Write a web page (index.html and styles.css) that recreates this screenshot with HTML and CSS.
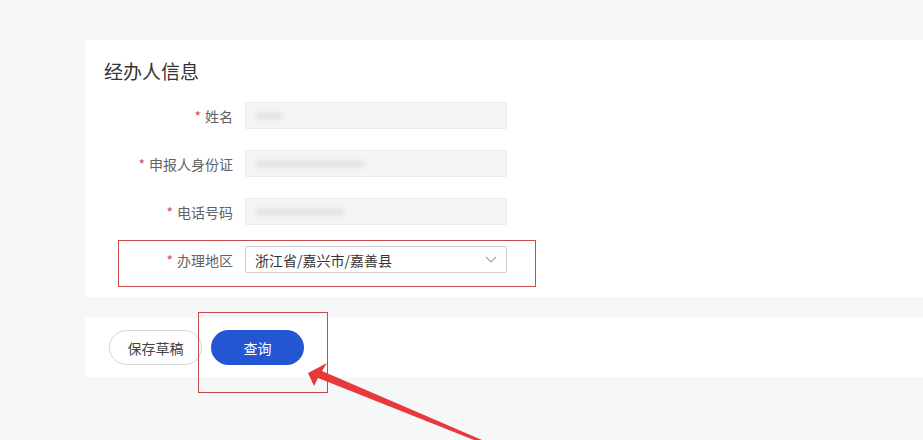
FILE: index.html
```html
<!DOCTYPE html>
<html lang="zh">
<head>
<meta charset="utf-8">
<link rel="stylesheet" href="styles.css">
</head>
<body>
<div class="page">
  <section class="card info">
    <h2 class="title">经办人信息</h2>
    <div class="row">
      <label class="label"><span class="req">*</span>姓名</label>
      <div class="input"><span class="blur b1"></span></div>
    </div>
    <div class="row">
      <label class="label"><span class="req">*</span>申报人身份证</label>
      <div class="input"><span class="blur b2"></span></div>
    </div>
    <div class="row">
      <label class="label"><span class="req">*</span>电话号码</label>
      <div class="input"><span class="blur b3"></span></div>
    </div>
    <div class="row">
      <label class="label"><span class="req">*</span>办理地区</label>
      <div class="input select">
        <span class="value">浙江省/嘉兴市/嘉善县</span>
        <svg class="chev" width="12" height="7" viewBox="0 0 12 7"><path d="M1 1 L6 6 L11 1" fill="none" stroke="#a0a0a0" stroke-width="1.1"/></svg>
      </div>
    </div>
    <div class="mark mark-region"></div>
  </section>
  <section class="card actions">
    <button class="btn btn-ghost">保存草稿</button>
    <button class="btn btn-primary">查询</button>
    <div class="mark mark-btn"></div>
  </section>
  <svg class="arrow" width="923" height="440" viewBox="0 0 923 440">
    <polygon points="308,373 327,363 322,371 482,440 474,440 318,378 314,386" fill="#e8393a"/>
  </svg>
</div>
</body>
</html>
```
FILE: styles.css
```css
* { box-sizing: border-box; }
html, body { margin: 0; padding: 0; }
body {
  background: #f6f7f9;
  font-family: "Microsoft YaHei", "Noto Sans CJK SC", "Liberation Sans", sans-serif;
  width: 923px;
  height: 440px;
  overflow: hidden;
}
.page {
  position: relative;
  padding: 40px 0 0 85px;
  height: 440px;
}
.card {
  background: #fff;
  position: relative;
}
.info {
  height: 257px;
  padding: 18px 0 0 0;
}
.title {
  margin: 0 0 18px 19px;
  font-size: 19px;
  font-weight: normal;
  line-height: 26px;
  color: #333;
}
.row {
  display: flex;
  align-items: center;
  height: 27px;
  margin-bottom: 21px;
}
.label {
  width: 148px;
  text-align: right;
  padding-right: 0;
  font-size: 14px;
  color: #606266;
  margin-right: 12px;
}
.req {
  color: #d0504f;
  margin-right: 4px;
}
.input {
  width: 262px;
  height: 27px;
  background: #f5f5f5;
  border: 1px solid #ececec;
  border-radius: 2px;
  position: relative;
  display: flex;
  align-items: center;
  padding-left: 9px;
}
.blur {
  display: block;
  height: 8px;
  background: #e4e4e4;
  border-radius: 4px;
  filter: blur(2px);
}
.b1 { width: 28px; }
.b2 { width: 110px; }
.b3 { width: 90px; }
.select {
  background: #fff;
  border: 1px solid #cfcfcf;
  justify-content: space-between;
  padding-right: 9px;
}
.value {
  font-size: 14px;
  color: #333;
}
.mark {
  position: absolute;
  border: 1px solid #c9494b;
}
.mark-region {
  left: 33px;
  top: 200px;
  width: 418px;
  height: 47px;
}
.actions {
  margin-top: 21px;
  height: 59px;
  display: flex;
  align-items: center;
  padding-left: 24px;
  gap: 9px;
}
.btn {
  height: 35px;
  border-radius: 18px;
  font-size: 14px;
  font-family: inherit;
  cursor: pointer;
}
.btn-ghost {
  width: 93px;
  background: #fff;
  border: 1px solid #d6d6d6;
  color: #444;
}
.btn-primary {
  width: 93px;
  background: #2456d3;
  border: none;
  color: #fff;
}
.mark-btn {
  left: 113px;
  top: -6px;
  width: 130px;
  height: 81px;
}
.arrow {
  position: absolute;
  left: 0;
  top: 0;
  pointer-events: none;
}
```
